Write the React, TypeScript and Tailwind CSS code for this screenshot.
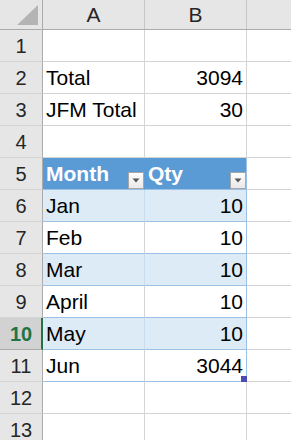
import React from "react";

type Kind = "plain" | "thead" | "band" | "white";
type Row = { n: number; a?: string; b?: string; kind?: Kind };

const rows: Row[] = [
  { n: 1 },
  { n: 2, a: "Total", b: "3094" },
  { n: 3, a: "JFM Total", b: "30" },
  { n: 4 },
  { n: 5, a: "Month", b: "Qty", kind: "thead" },
  { n: 6, a: "Jan", b: "10", kind: "band" },
  { n: 7, a: "Feb", b: "10", kind: "white" },
  { n: 8, a: "Mar", b: "10", kind: "band" },
  { n: 9, a: "April", b: "10", kind: "white" },
  { n: 10, a: "May", b: "10", kind: "band" },
  { n: 11, a: "Jun", b: "3044", kind: "white" },
  { n: 12 },
  { n: 13 },
];

function FilterBtn() {
  return (
    <div className="w-[16px] h-[17px] border border-[#a6a6a6] bg-gradient-to-b from-[#fdfdfd] to-[#e9e9e9] flex items-center justify-center">
      <svg width="8" height="5" viewBox="0 0 8 5">
        <path d="M0.5 0.5 L7.5 0.5 L4 4.5 Z" fill="#555" />
      </svg>
    </div>
  );
}

export default function App() {
  return (
    <div
      className="w-[291px] h-[440px] overflow-hidden bg-white text-[21px] leading-[24px] text-black"
      style={{ fontFamily: '"Liberation Sans", Arial, sans-serif' }}
    >
      <div className="flex h-[30px] bg-[#e6e6e6] border-b border-[#ababab]">
        <div className="w-[43px] shrink-0 border-r border-[#ababab] relative">
          <svg className="absolute left-[17px] top-[5px]" width="21" height="20" viewBox="0 0 21 20">
            <path d="M21 0 L21 20 L0 20 Z" fill="#b4b4b4" />
          </svg>
        </div>
        <div className="w-[102px] shrink-0 border-r border-[#c6c6c6] flex items-end justify-center pb-[2px] text-[#262626]">A</div>
        <div className="w-[102px] shrink-0 border-r border-[#c6c6c6] flex items-end justify-center pb-[2px] text-[#262626]">B</div>
        <div className="flex-1" />
      </div>
      {rows.map((r) => {
        const sel = r.n === 10;
        const kind: Kind = r.kind ?? "plain";
        const inTable = kind !== "plain";
        const isHead = kind === "thead";
        const bg = isHead ? "bg-[#5b9bd5]" : kind === "band" ? "bg-[#ddebf7]" : "bg-white";
        const bBottom = inTable ? "border-b-[#9bc2e6]" : "border-b-[#d4d4d4]";
        const aRight = isHead
          ? "border-r-[#5b9bd5]"
          : kind === "band"
          ? "border-r-[#c9dcee]"
          : "border-r-[#d4d4d4]";
        const bRight = inTable ? "border-r-[#9bc2e6]" : "border-r-[#d4d4d4]";
        const textCls = isHead ? "text-white font-bold pb-[3px]" : "text-black";
        return (
          <div key={r.n} className="flex h-[32px]">
            <div
              className={
                "w-[43px] shrink-0 border-b border-r flex items-end justify-center pb-[3px] text-[20px] " +
                (sel
                  ? "bg-[#d2d2d2] border-b-[#ababab] border-r-2 border-r-[#217346] text-[#217346] font-bold"
                  : "bg-[#e6e6e6] border-b-[#d4d4d4] border-r-[#ababab] text-[#262626]")
              }
            >
              <span className={sel ? "pl-[1px]" : ""}>{r.n}</span>
            </div>
            <div
              className={
                "w-[102px] shrink-0 border-b border-r flex items-end justify-between pl-[3px] " +
                (isHead ? "pb-0 " : "pb-[3px] ") +
                bg + " " + bBottom + " " + aRight
              }
            >
              <span className={textCls}>{r.a}</span>
              {isHead && <FilterBtn />}
            </div>
            <div
              className={
                "w-[102px] shrink-0 border-b border-r flex items-end relative " +
                (isHead ? "justify-between pl-[3px] pb-0 " : "justify-end pr-[3px] pb-[3px] ") +
                bg + " " + bBottom + " " + bRight
              }
            >
              <span className={textCls}>{r.b}</span>
              {isHead && <FilterBtn />}
              {r.n === 11 && (
                <div className="absolute right-[-1px] bottom-[-1px] w-[6px] h-[6px] bg-[#4b4bb5]" />
              )}
            </div>
            <div className="flex-1 border-b border-[#d4d4d4]" />
          </div>
        );
      })}
    </div>
  );
}
